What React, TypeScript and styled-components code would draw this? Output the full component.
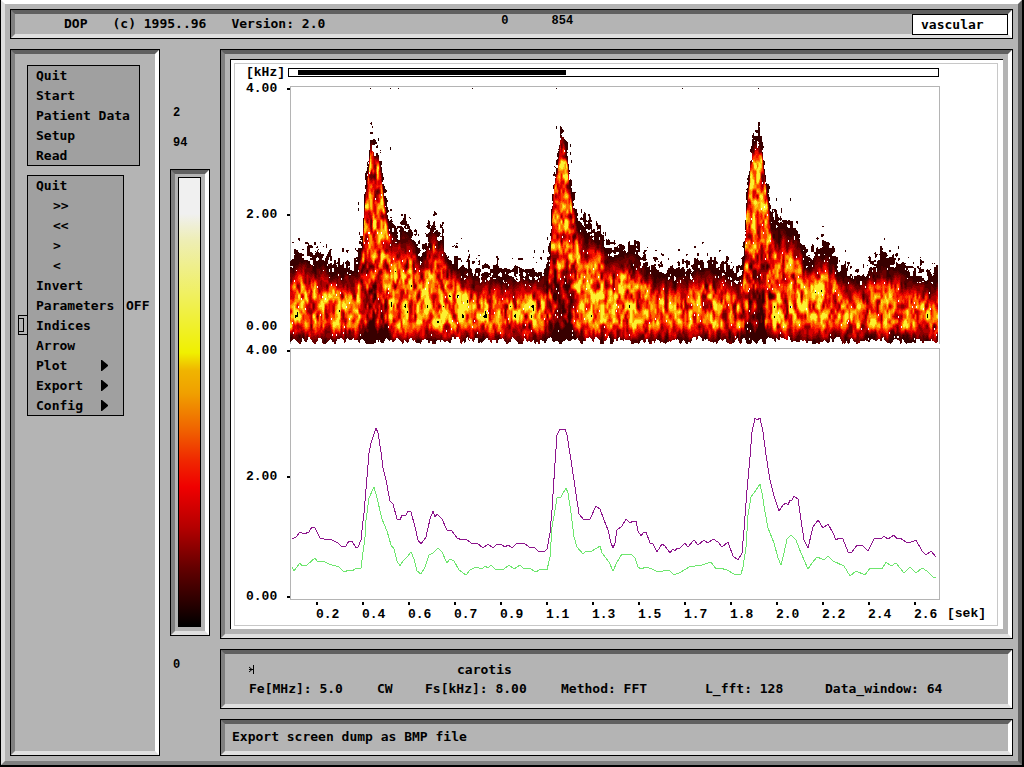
import React from "react";
import styled, { createGlobalStyle, css } from "styled-components";

const GlobalStyle = createGlobalStyle`
  *, *::before, *::after { box-sizing: border-box; }
  body { margin: 0; background: #000; }
`;

const mono = `"DejaVu Sans Mono", "Liberation Mono", monospace`;
const smallMono = `"Liberation Mono", "DejaVu Sans Mono", monospace`;

/* ---------- frame ---------- */

const Desktop = styled.div`
  min-height: 100vh;
  display: flex;
  flex-direction: column;
  gap: 10px;
  padding: 5px;
  background: #b4b4b4;
  border: 4px solid;
  border-color: #fff #606060 #808080 #dedede;
  color: #000;
  font: bold 13px/20px ${mono};
`;

const Screen = styled.div`
  background: #000;
  padding: 0 2px 2px 1px;
  & > ${Desktop} { min-height: calc(100vh - 2px); }
`;

const bevel = css`
  margin: 1px;
  border: 4px solid;
  border-color: #606060 #fff #e0e0e0 #808080;
  box-shadow: 0 0 0 1px #000;
`;

const TitleBar = styled.header`
  ${bevel}
  display: flex;
  align-items: center;
  height: 28px;
  padding-left: 49px;
  white-space: pre;
`;

const Title = styled.h1`
  margin: 0;
  display: flex;
  gap: 25px;
  font: inherit;
`;

const Counters = styled.div`
  display: flex;
  gap: 43px;
  flex: 1;
  margin-left: 176px;
  padding-bottom: 5px;
  font: bold 12px/15px ${smallMono};
`;

const ModeBox = styled.input`
  width: 96px;
  height: 21px;
  padding: 0 8px;
  border: 1px solid #000;
  border-radius: 0;
  background: #fff;
  color: #000;
  font: inherit;
`;

const Body = styled.div`
  flex: 1;
  display: grid;
  grid-template-columns: 150px 40px minmax(0, 1fr);
  column-gap: 10px;
`;

/* ---------- side menu ---------- */

const Sidebar = styled.nav`
  ${bevel}
  padding: 11px 12px;
  display: flex;
  flex-direction: column;
  align-items: flex-start;
  gap: 9px;
`;

const Menu = styled.ul<{ $width: number }>`
  list-style: none;
  margin: 0;
  padding: 0;
  width: ${(p) => p.$width}px;
  background: #a0a0a0;
  border: 1px solid #000;
  border-bottom: 0;
  box-shadow: inset 0 -1px #000;
`;

const MenuRow = styled.li`
  position: relative;
  height: 20px;
`;

const MenuButton = styled.button<{ $indent?: boolean }>`
  display: flex;
  align-items: center;
  width: 100%;
  height: 19px;
  padding: 0 0 0 ${(p) => (p.$indent ? 25 : 8)}px;
  border: 0;
  background: none;
  color: inherit;
  font: inherit;
  line-height: 19px;
  text-align: left;
  white-space: nowrap;
`;

const MenuLabel = styled.span<{ $width?: number }>`
  flex: 0 0 ${(p) => (p.$width ? `${p.$width}px` : "auto")};
`;

const Marker = styled.span`
  position: absolute;
  left: -10px;
  top: -1px;
  width: 10px;
  height: 20px;
  padding: 2px 3px 2px 0;
  border: 1px solid #000;
  &::before {
    content: "";
    display: block;
    height: 100%;
    border: 1px solid #000;
    border-left: 0;
  }
`;

/* ---------- colour scale ---------- */

const ScaleColumn = styled.aside`
  display: flex;
  flex-direction: column;
  padding-top: 49px;
  font: bold 12px/30px ${smallMono};
`;

const ScaleLabel = styled.span`
  padding-left: 3px;
`;

const ScaleFrame = styled.div`
  ${bevel}
  margin-top: 12px;
  height: 465px;
  padding: 3px 4px 4px 3px;
`;

const ScaleBar = styled.div`
  height: 100%;
  border: 1px solid #000;
  background: linear-gradient(
    #f0f0f0 0%, #f0f0f0 8%, #eeeeb4 14%, #f0f060 26%, #f0f000 39%,
    #f0b400 43%, #f0a000 48%, #f06400 56%, #f02800 63%, #f00000 69%,
    #b40000 78%, #640000 87%, #280000 95%, #000 100%
  );
`;

const ScaleFoot = styled(ScaleLabel)`
  margin-top: 14px;
`;

/* ---------- charts ---------- */

const Main = styled.main`
  display: flex;
  flex-direction: column;
  gap: 10px;
  min-width: 0;
`;

const ChartPanel = styled.section`
  ${bevel}
  padding: 5px;
`;

const Sheet = styled.div`
  background: #fff;
  padding: 3px 5px 3px 3px;
  border: solid #000;
  border-width: 1px 0 0 1px;
`;

const ChartGrid = styled.div`
  display: grid;
  grid-template-columns: 55px minmax(0, 1fr) 57px;
  grid-template-rows: 22px 262px 252px 25px;
  border: 1px solid #c8c8c8;
  font: bold 13px/16px ${smallMono};
`;

const UnitLabel = styled.span`
  padding-left: 11px;
  line-height: 18px;
`;

const TimeUnit = styled.span`
  grid-column: 3;
  padding: 6px 0 0 7px;
`;

const RangeTrack = styled.div`
  margin: 4px 1px 0 -2px;
  height: 9px;
  padding: 1px 9px;
  border: 1px solid #000;
`;

const RangeFill = styled.div`
  height: 100%;
  background: #000;
`;

const ValueAxis = styled.div<{ $low: number }>`
  display: grid;
  grid-template-rows: 126px ${(p) => p.$low}px 20px;
  margin-top: -7px;
  padding-left: 11px;
  line-height: 20px;
`;

const AxisValue = styled.span<{ $tick: boolean }>`
  display: flex;
  align-items: center;
  justify-content: space-between;
  height: 20px;
  &::after {
    content: "";
    width: 3px;
    height: 2px;
    background: ${(p) => (p.$tick ? "#000" : "transparent")};
  }
`;

const Plot = styled.svg`
  grid-column: 2;
  display: block;
  width: 100%;
  shape-rendering: crispEdges;
`;

const TimeAxis = styled.div`
  grid-column: 2;
  display: flex;
  padding: 2px 0 0 26px;
`;

const TimeValue = styled.span<{ $grow: number }>`
  flex: ${(p) => p.$grow} 0 0;
  min-width: 0;
  &::before {
    content: "";
    display: block;
    width: 2px;
    height: 3px;
    margin-bottom: 2px;
    background: #000;
  }
`;

/* ---------- info and status ---------- */

const InfoPanel = styled.section`
  ${bevel}
  height: 58px;
  padding: 6px 0 0 24px;
  line-height: 19px;
  white-space: nowrap;
`;

const InfoHead = styled.div`
  display: grid;
  grid-template-columns: 208px auto;
  align-items: center;
`;

const InfoFields = styled.div`
  display: grid;
  grid-template-columns: 128px 48px 136px 144px 120px auto;
`;

const StatusBar = styled.footer`
  ${bevel}
  flex: 1;
  min-height: 35px;
  padding: 3px 7px;
`;

/* ---------- data ---------- */

type Point = [number, number];

const parse = (s: string): Point[] =>
  s.trim().split(/\s+/).map((p) => p.split(",").map(Number) as Point);

const sampleAt = (pts: Point[], x: number) => {
  for (let i = 1; i < pts.length; i++) {
    if (x <= pts[i][0]) {
      const [x0, y0] = pts[i - 1];
      const [x1, y1] = pts[i];
      return y0 + ((y1 - y0) * (x - x0)) / (x1 - x0);
    }
  }
  return pts[pts.length - 1][1];
};

// upper edge of the spectrum, in plot pixels
const envelope = parse(`
  0,176 10,166 20,166 30,171 38,172 45,178 60,181 67,178 70,159 72,149 74,114 75,99 77,84
  79,64 80,52 82,50 84,60 88,64 91,79 93,99 95,112 98,129 102,138 107,146 111,139 116,134
  121,144 127,157 130,164 135,154 140,139 143,132 148,144 152,149 157,164 165,171 175,178
  190,183 210,185 230,185 250,186 257,181 260,154 262,109 264,89 267,74 270,44 273,44 276,59
  279,84 282,109 285,119 288,134 295,142 303,144 310,142 314,154 321,164 328,160 335,159
  342,160 350,167 360,178 380,186 400,181 407,174 422,174 435,181 445,188 452,182 454,159
  456,109 459,84 460,64 462,54 468,48 471,54 473,69 476,94 478,109 481,129 485,134 495,136
  503,140 510,149 514,169 519,174 525,162 535,159 543,166 548,179 560,187 575,184 582,172
  595,171 605,176 620,186 630,188 650,188
`);

const maxTrace = `
  2,191 6,189 10,184 14,186 19,184 22,179 25,180 30,190 34,191 42,192 48,195 52,199 56,198
  59,193 62,193 66,200 68,199 71,192 72,182 74,165 77,129 79,105 81,95 86,80 88,85 91,104
  93,120 96,132 100,153 103,156 107,171 110,172 112,167 116,167 118,163 121,164 125,179
  128,192 131,196 136,189 140,171 143,163 145,169 147,166 152,171 157,182 162,183 167,190
  172,192 176,191 181,195 187,195 193,200 198,196 203,200 207,196 211,196 215,199 218,197
  222,200 227,195 234,195 239,199 244,199 248,203 254,204 257,201 260,185 262,162 265,115
  267,87 270,81 275,81 277,87 281,112 285,139 289,166 294,172 300,171 306,158 310,161
  314,172 318,182 321,195 323,200 325,195 327,182 332,178 336,171 340,175 343,173 346,173
  348,183 351,188 353,185 356,184 360,195 363,196 367,204 372,196 375,198 380,205 383,201
  385,203 387,200 389,201 395,195 398,199 404,192 408,197 414,192 418,195 423,191 428,194
  432,199 438,194 443,208 448,212 452,205 454,182 457,142 460,109 462,84 465,70 467,72
  470,70 473,84 476,107 480,132 484,148 489,163 493,157 496,155 498,157 500,152 502,152
  504,148 508,151 510,165 514,192 518,200 523,179 528,172 533,180 538,176 543,185 546,192
  549,190 553,191 558,204 562,204 567,197 572,197 578,203 584,191 592,190 594,188 598,191
  604,187 607,191 610,190 616,194 619,195 626,192 632,203 636,207 641,203 646,209
`;

const meanTrace = `
  2,219 4,223 7,219 10,215 12,218 17,217 25,210 28,214 33,213 39,216 49,219 54,224 59,222
  62,223 67,220 71,220 72,212 75,189 76,172 79,150 84,139 87,150 92,171 97,183 101,197
  104,201 107,213 110,218 113,213 117,209 121,204 124,211 127,223 131,226 135,219 139,207
  143,205 148,200 152,204 157,215 160,211 164,213 169,222 176,227 180,222 186,219 192,221
  195,218 198,220 201,217 206,222 214,221 219,217 224,221 230,217 233,220 239,220 246,224
  251,221 257,222 260,209 262,179 265,162 267,150 271,149 276,140 278,145 281,165 284,189
  287,199 293,206 296,203 302,203 310,198 312,205 319,214 323,223 327,214 332,206 335,207
  341,206 345,210 348,219 351,221 356,219 362,221 368,224 379,222 384,227 391,224 399,219
  412,217 421,214 426,221 430,220 437,222 444,226 451,226 453,219 456,199 458,167 461,149
  466,142 470,136 472,145 475,164 478,180 484,195 488,210 491,217 494,205 497,191 501,187
  506,192 511,205 518,221 522,215 527,209 532,211 535,211 538,208 543,213 554,218 560,228
  566,223 575,227 580,220 585,220 592,221 596,214 601,218 606,215 614,225 620,219 626,225
  632,220 637,223 644,230 646,229
`;

const heat = [
  "#380000", "#500000", "#6c0000", "#8c0000", "#b00000", "#d80000", "#f41000",
  "#fc3c00", "#fc6c00", "#fc9800", "#fcc410", "#fcf030", "#000000",
];

const hash = (x: number, y: number, seed: number) => {
  let h = Math.imul(x, 374761393) ^ Math.imul(y, 668265263) ^ Math.imul(seed, 1274126177);
  h = Math.imul(h ^ (h >>> 13), 1274126177);
  h = Math.imul(h ^ (h >>> 16), 2246822519);
  return ((h ^ (h >>> 15)) >>> 0) / 4294967296;
};

const noise = (x: number, y: number, sx: number, sy: number, seed: number) => {
  const gx = x / sx;
  const gy = y / sy;
  const ix = Math.floor(gx);
  const iy = Math.floor(gy);
  const fx = gx - ix;
  const fy = gy - iy;
  const ux = fx * fx * (3 - 2 * fx);
  const uy = fy * fy * (3 - 2 * fy);
  const a = hash(ix, iy, seed);
  const b = hash(ix + 1, iy, seed);
  const c = hash(ix, iy + 1, seed);
  const d = hash(ix + 1, iy + 1, seed);
  return a + (b - a) * ux + (c - a) * uy + (a - b - c + d) * ux * uy;
};

const ramp = (v: number, a: number, b: number) => Math.min(1, Math.max(0, (v - a) / (b - a)));

// paths of one-pixel columns, one path for each heat colour
const buildSpectrum = () => {
  const paths: string[] = heat.map(() => "");
  const beats = [83, 271, 467];
  for (let x = 0; x < 648; x++) {
    const top = sampleAt(envelope, x);
    const systole = Math.max(...beats.map((b) => 1 - ramp(Math.abs(x - b), 7, 18)));
    const spike = hash(x >> 1, 0, 7);
    const lift = spike > 0.8 ? 5 : spike < 0.2 ? -4 : 0;
    const floor = 258 - noise(x, 0, 3, 1, 5) * 7 + (hash(x >> 1, 1, 6) - 0.5) * 4;
    let runStart = 0;
    let runColor = -1;
    const flush = (y: number) => {
      if (runColor >= 0) paths[runColor] += `M${x} ${runStart}h1V${y}h-1z`;
    };
    for (let y = 36; y <= 258; y++) {
      const depth = y - top;
      const edge = noise(x, y, 3, 4, 3) * 32 - 15 + lift + (hash(x >> 1, y >> 1, 4) - 0.5) * 8;
      let color = -1;
      const speck = hash(x, y >> 1, 9) < 0.009;
      if (y < 258 && depth + edge > 0 && y < floor && !speck) {
        const rise = ramp(depth, 4, 18 + 16 * (1 - systole));
        const fall = 1 - ramp(y, 236, 254);
        let level = 0.06 + 0.66 * rise * (0.12 + 0.88 * fall);
        level -= systole * (0.06 + ramp(y, 160, 205) * 0.38);
        level -= (1 - systole) * 0.12 * (1 - ramp(y, 180, 205));
        const grain = noise(x, y, 4, 10, 1) * 0.6 + noise(x + 7, y, 2, 5, 2) * 0.4 - 0.5;
        level += grain * (0.15 + 1.1 * rise * (0.35 + 0.65 * fall));
        color = Math.min(12, Math.max(0, Math.floor(level * 12)));
        if (color === 12 && level < 1.16) color = 11;
      }
      if (color !== runColor) {
        flush(y);
        runColor = color;
        runStart = y;
      }
    }
    flush(258);
  }
  return paths;
};

const spectrum = buildSpectrum();
const strayDots = parse("80,2 100,2 108,2 182,2 266,2 392,2 468,2 266,40 88,52 100,61 68,116 68,122 244,164 253,164 257,151 280,58 280,66 281,74 486,112 500,112 608,160 630,173");
const times = ["0.2", "0.4", "0.6", "0.7", "0.9", "1.1", "1.3", "1.5", "1.7", "1.8", "2.0", "2.2", "2.4", "2.6"];
const axisValues = ["4.00", "2.00", "0.00"];

interface Item {
  label: string;
  indent?: boolean;
  state?: string;
  submenu?: boolean;
  marked?: boolean;
}

const fileMenu: Item[] = [
  { label: "Quit" }, { label: "Start" }, { label: "Patient Data" }, { label: "Setup" }, { label: "Read" },
];

const viewMenu: Item[] = [
  { label: "Quit" },
  { label: ">>", indent: true },
  { label: "<<", indent: true },
  { label: ">", indent: true },
  { label: "<", indent: true },
  { label: "Invert" },
  { label: "Parameters", state: "OFF" },
  { label: "Indices", marked: true },
  { label: "Arrow" },
  { label: "Plot", submenu: true },
  { label: "Export", submenu: true },
  { label: "Config", submenu: true },
];

const SubmenuArrow = () => (
  <svg width="7" height="11" viewBox="0 0 7 11" aria-hidden="true">
    <path d="M0 0h1l6 5v1l-6 5h-1z" />
  </svg>
);

const MenuList = ({ items, width }: { items: Item[]; width: number }) => (
  <Menu $width={width}>
    {items.map((item) => (
      <MenuRow key={item.label}>
        {item.marked && <Marker />}
        <MenuButton type="button" $indent={item.indent}>
          <MenuLabel $width={item.submenu ? 65 : item.state ? 90 : undefined}>{item.label}</MenuLabel>
          {item.state && <span>{item.state}</span>}
          {item.submenu && <SubmenuArrow />}
        </MenuButton>
      </MenuRow>
    ))}
  </Menu>
);

const Axis = ({ low, zeroTick }: { low: number; zeroTick: boolean }) => (
  <ValueAxis $low={low}>
    {axisValues.map((v) => (
      <AxisValue key={v} $tick={zeroTick || v !== "0.00"}>{v}</AxisValue>
    ))}
  </ValueAxis>
);

export default function App() {
  return (
    <>
      <GlobalStyle />
      <Screen>
        <Desktop>
          <TitleBar>
            <Title>
              <span>DOP</span>
              <span>(c) 1995..96</span>
              <span>Version: 2.0</span>
            </Title>
            <Counters>
              <span>0</span>
              <span>854</span>
            </Counters>
            <ModeBox aria-label="Mode" defaultValue="vascular" />
          </TitleBar>
          <Body>
            <Sidebar>
              <MenuList items={fileMenu} width={113} />
              <MenuList items={viewMenu} width={97} />
            </Sidebar>
            <ScaleColumn>
              <ScaleLabel>2</ScaleLabel>
              <ScaleLabel>94</ScaleLabel>
              <ScaleFrame>
                <ScaleBar />
              </ScaleFrame>
              <ScaleFoot>0</ScaleFoot>
            </ScaleColumn>
            <Main>
              <ChartPanel>
                <Sheet>
                  <ChartGrid>
                    <UnitLabel>[kHz]</UnitLabel>
                    <RangeTrack>
                      <RangeFill style={{ width: `${(268 / 631) * 100}%` }} />
                    </RangeTrack>
                    <span />
                    <Axis low={112} zeroTick={false} />
                    <Plot viewBox="0 0 650 258" height="258" preserveAspectRatio="none">
                      <path d="M0 0h650v258h-1V1H1v257H0z" fill="#b4b4b4" />
                      {spectrum.map((d, i) => (
                        <path key={heat[i]} d={d} fill={heat[i]} />
                      ))}
                      {strayDots.map(([x, y]) => (
                        <rect key={`${x}-${y}`} x={x} y={y} width="1" height={y < 5 ? 1 : 3} fill="#200" />
                      ))}
                    </Plot>
                    <span />
                    <Axis low={120} zeroTick />
                    <Plot viewBox="0 0 650 252" height="252" preserveAspectRatio="none">
                      <path d="M0 0h650v252H0zM1 1v250h648V1z" fill="#b4b4b4" fillRule="evenodd" />
                      <polyline points={meanTrace} fill="none" stroke="#6ee66e" />
                      <polyline points={maxTrace} fill="none" stroke="#8c148c" />
                    </Plot>
                    <span />
                    <TimeAxis>
                      {times.map((t, i) => (
                        <TimeValue key={t} $grow={i === times.length - 1 ? 26 : 46}>{t}</TimeValue>
                      ))}
                    </TimeAxis>
                    <TimeUnit>[sek]</TimeUnit>
                  </ChartGrid>
                </Sheet>
              </ChartPanel>
              <InfoPanel>
                <InfoHead>
                  <svg width="6" height="9" viewBox="0 0 6 9" aria-hidden="true">
                    <path d="M0 2l3 2.5L0 7M0 4.500h4M4.500 0v9" fill="none" stroke="#000" />
                  </svg>
                  <span>carotis</span>
                </InfoHead>
                <InfoFields>
                  <span>Fe[MHz]: 5.0</span>
                  <span>CW</span>
                  <span>Fs[kHz]: 8.00</span>
                  <span>Method: FFT</span>
                  <span>L_fft: 128</span>
                  <span>Data_window: 64</span>
                </InfoFields>
              </InfoPanel>
              <StatusBar>Export screen dump as BMP file</StatusBar>
            </Main>
          </Body>
        </Desktop>
      </Screen>
    </>
  );
}
